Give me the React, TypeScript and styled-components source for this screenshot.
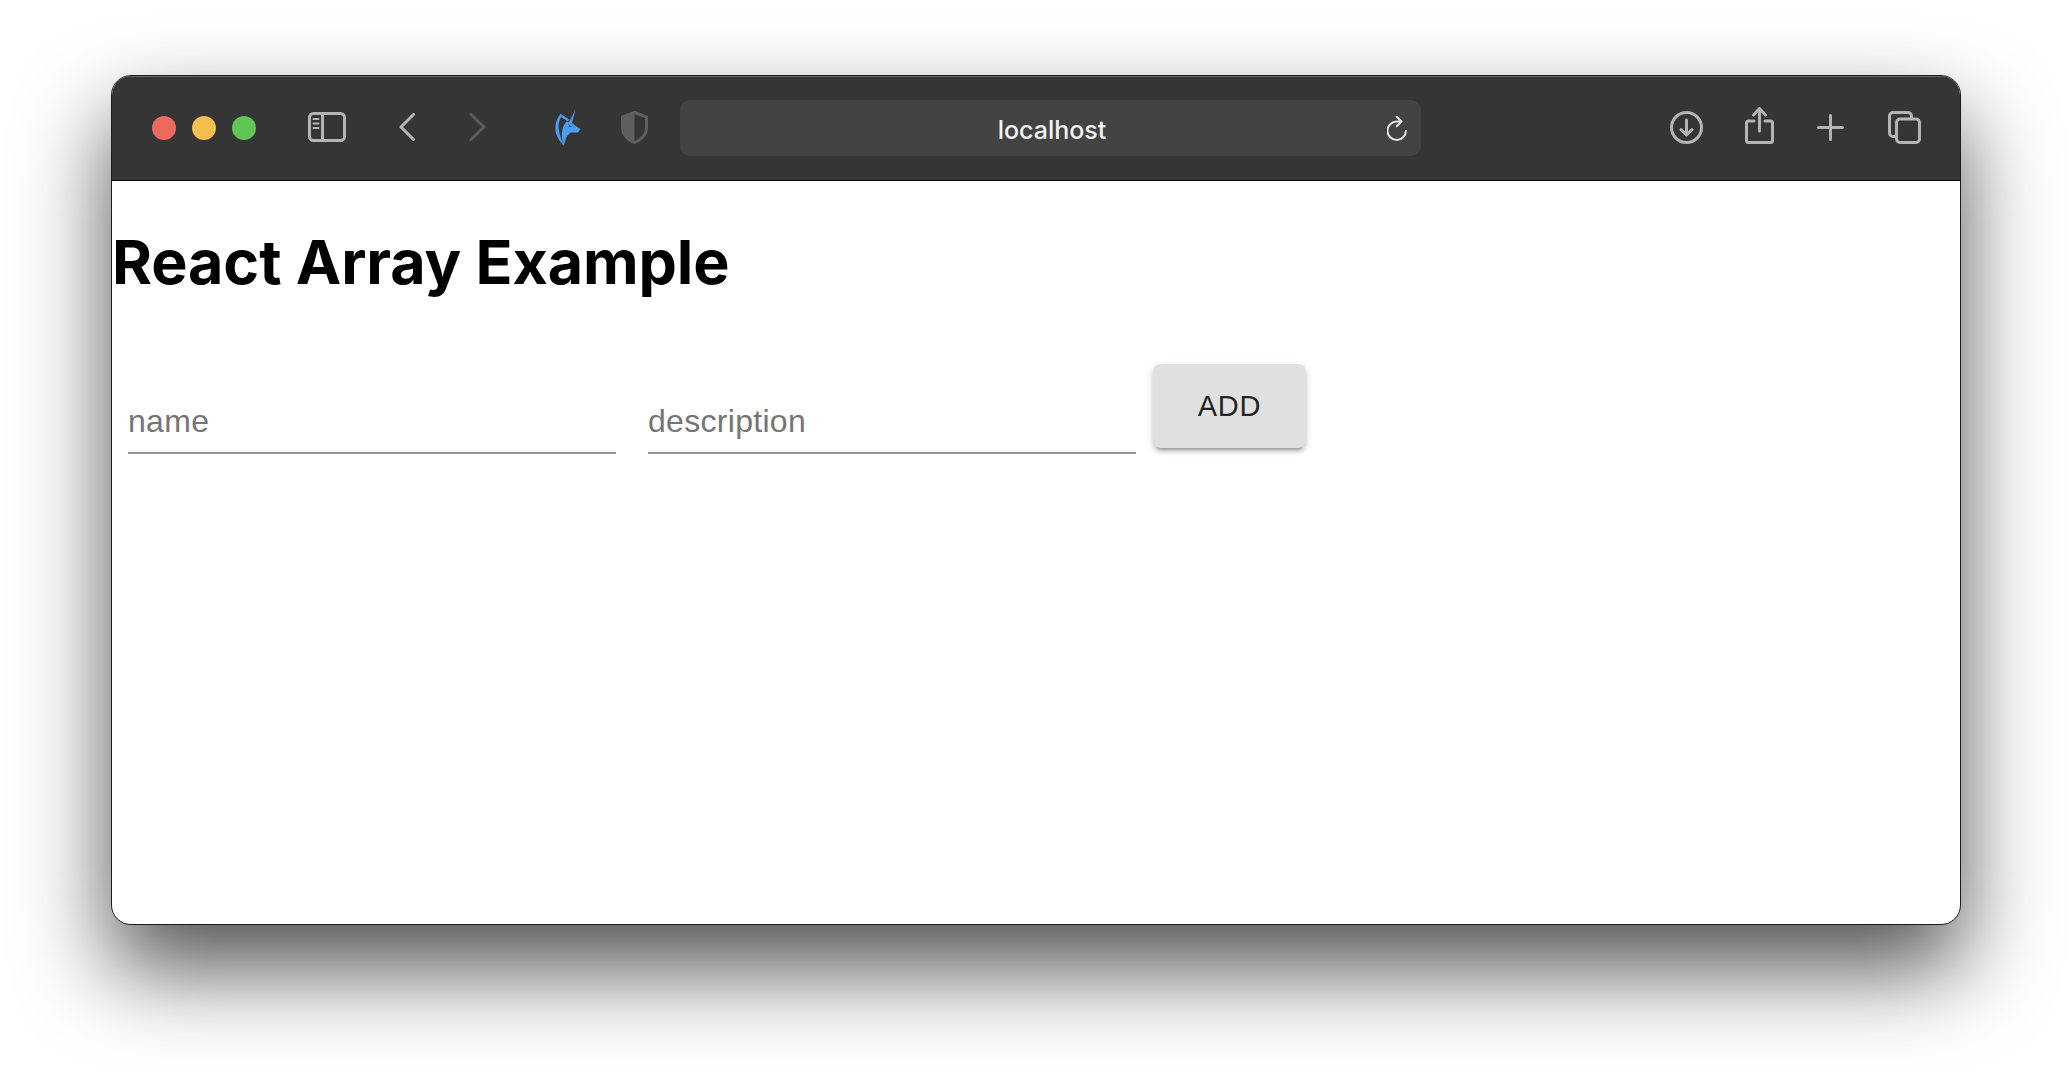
import React from 'react';
import styled, { createGlobalStyle } from 'styled-components';

const GlobalStyle = createGlobalStyle`
  html, body {
    margin: 0;
    padding: 0;
    background: #fff;
  }
`;

const Page = styled.div`
  width: 2072px;
  height: 1072px;
  padding: 75px 110px 0 111px;
  box-sizing: border-box;
  overflow: hidden;
  background: #fff;
`;

const BrowserWindow = styled.div`
  width: 1850px;
  height: 850px;
  box-sizing: border-box;
  display: flex;
  flex-direction: column;
  background: #fff;
  border: 1px solid #1c1c1c;
  border-radius: 20px;
  overflow: hidden;
  box-shadow: 0 44px 90px rgba(0, 0, 0, 0.68);
`;

const Toolbar = styled.div`
  flex: none;
  height: 105px;
  box-sizing: border-box;
  display: flex;
  align-items: center;
  padding: 0 39px 2px 40px;
  background: #353535;
  border-bottom: 1px solid #0c0c0c;
  box-shadow: inset 0 1px 0 #6a6a6a;
`;

const Lights = styled.div`
  display: flex;
  gap: 16px;
  margin-top: 2px;
`;

const Light = styled.span<{ $color: string }>`
  width: 24px;
  height: 24px;
  border-radius: 50%;
  background: ${(p) => p.$color};
`;

const ToolIcon = styled.svg<{ $gap: number; $shift?: number }>`
  flex: none;
  display: block;
  margin-left: ${(p) => p.$gap}px;
  margin-top: ${(p) => p.$shift ?? 0}px;
`;

const UrlBar = styled.div`
  flex: none;
  width: 741px;
  height: 56px;
  margin: 2px 0 0 32px;
  display: grid;
  grid-template-columns: 1fr auto 1fr;
  align-items: center;
  background: #434343;
  border-radius: 10px;
`;

const UrlText = styled.span`
  grid-column: 2;
  margin: 3px 0 0 3px;
  font-family: Inter, 'Liberation Sans', sans-serif;
  font-size: 25px;
  font-weight: 500;
  color: #f2f2f2;
`;

const ReloadSlot = styled.span`
  grid-column: 3;
  justify-self: end;
  display: flex;
  padding-right: 13px;
`;

const Content = styled.div`
  flex: 1;
`;

const Heading = styled.h1`
  margin: 0;
  padding-top: 44px;
  font-family: Inter, 'Liberation Sans', sans-serif;
  font-size: 61px;
  line-height: 74px;
  font-weight: 700;
  letter-spacing: -0.1px;
  color: #000;
`;

const FormRow = styled.form`
  display: flex;
  align-items: flex-start;
  margin-top: 65px;
`;

const Field = styled.input`
  width: 488px;
  height: 60px;
  margin: 30px 16px 0;
  padding: 0 0 4px;
  box-sizing: border-box;
  border: 0;
  border-bottom: 2px solid #949494;
  outline: none;
  background: transparent;
  font-family: 'Liberation Sans', Arial, sans-serif;
  font-size: 32px;
  letter-spacing: 0.3px;
  color: #333;

  &::placeholder {
    color: #757575;
    opacity: 1;
  }
`;

const AddButton = styled.button`
  width: 153px;
  height: 84px;
  margin-left: 1px;
  border: 0;
  border-radius: 8px;
  background: #e0e0e0;
  color: rgba(0, 0, 0, 0.87);
  font-family: 'Liberation Sans', Arial, sans-serif;
  font-size: 29px;
  letter-spacing: 0.8px;
  box-shadow: 0 6px 2px -4px rgba(0, 0, 0, 0.2), 0 4px 4px 0 rgba(0, 0, 0, 0.14),
    0 2px 10px 0 rgba(0, 0, 0, 0.12);
`;

const stroke = { fill: 'none', stroke: '#b4b4b4', strokeWidth: 3, strokeLinecap: 'round', strokeLinejoin: 'round' } as const;

export default function App() {
  return (
    <Page>
      <GlobalStyle />
      <BrowserWindow>
        <Toolbar>
          <Lights>
            <Light $color="#ed6a5e" />
            <Light $color="#f4bf4f" />
            <Light $color="#61c554" />
          </Lights>
          <ToolIcon $gap={52} width="38" height="30" viewBox="0 0 38 30">
            <rect x="1.5" y="1.5" width="35" height="27" rx="4" {...stroke} />
            <path d="M14.5 1.5v27" {...stroke} />
            <path d="M5.5 7h5M5.5 11.5h5M5.5 16h5" {...stroke} strokeWidth={2} />
          </ToolIcon>
          <ToolIcon $gap={53} width="16" height="28" viewBox="0 0 16 28">
            <path d="M14.5 1.5 2 14l12.5 12.5" {...stroke} />
          </ToolIcon>
          <ToolIcon $gap={54} width="17" height="28" viewBox="0 0 17 28">
            <path d="M2 1.5 15 14 2 26.5" {...stroke} stroke="#5c5c5c" />
          </ToolIcon>
          <ToolIcon $gap={69} width="26" height="37" viewBox="0 0 26 37">
            <path
              d="M5.500 4.800 14 10.500 13 12.500 6 8C3.500 12 3 17 4 22 5 27 7 32 8.700 36.700 4.500 32 1 27 .5 21 0 15 2 9 5.500 4.800Z"
              fill="#4a9bf2"
            />
            <path
              d="M20.500 .5 17 14 21 17 25.500 20 23 23.500H16C13 25 11 28 10.500 31L8.700 36.700C7 31 6 26 7.500 20 8.500 16.500 10 14 11.500 12.500L14 13Z"
              fill="#4a9bf2"
            />
            <path d="M13.500 15.500 17 17.500 14 17.800Z" fill="#353535" />
          </ToolIcon>
          <ToolIcon $gap={40} width="27" height="33" viewBox="0 0 27 33">
            <path d="M13.500 1.500 25.500 6v11c0 6.500-5 11.500-12 14.500C6.500 28.500 1.500 23.500 1.500 17V6Z" fill="none" stroke="#5e5e5e" strokeWidth="3" strokeLinejoin="round" />
            <path d="M13.500 1.500 1.500 6v11c0 6.500 5 11.500 12 14.500Z" fill="#5e5e5e" />
          </ToolIcon>
          <UrlBar>
            <UrlText>localhost</UrlText>
            <ReloadSlot>
              <svg width="21" height="25" viewBox="0 0 21 25">
                <path d="M14 5.500H9.700A9.200 9.200 0 1 0 18.900 14.700" fill="none" stroke="#e4e4e4" strokeWidth="2" strokeLinecap="round" />
                <path d="M9.700 .8 14.500 5.500 9.700 10.200" fill="none" stroke="#e4e4e4" strokeWidth="2" strokeLinecap="round" strokeLinejoin="round" />
              </svg>
            </ReloadSlot>
          </UrlBar>
          <ToolIcon $gap={249} width="33" height="33" viewBox="0 0 33 33">
            <circle cx="16.500" cy="16.500" r="15" {...stroke} />
            <path d="M16.500 9v14.500M11 18.500l5.500 5.500 5.500-5.500" {...stroke} />
          </ToolIcon>
          <ToolIcon $gap={42} $shift={-4} width="29" height="37" viewBox="0 0 29 37">
            <path d="M9 14H3.500a2 2 0 0 0-2 2v17.500a2 2 0 0 0 2 2h22a2 2 0 0 0 2-2V16a2 2 0 0 0-2-2H20" {...stroke} />
            <path d="M14.500 24V2M8.500 8l6-6.500 6 6.500" {...stroke} />
          </ToolIcon>
          <ToolIcon $gap={43} width="27" height="27" viewBox="0 0 27 27">
            <path d="M13.500 1.500v24M1.500 13.500h24" {...stroke} />
          </ToolIcon>
          <ToolIcon $gap={44} width="33" height="33" viewBox="0 0 33 33">
            <path d="M7 25.500H5a3.500 3.500 0 0 1-3.500-3.500V5A3.500 3.500 0 0 1 5 1.500h15A3.500 3.500 0 0 1 23.500 5v2" {...stroke} />
            <rect x="8.500" y="8" width="23" height="23.500" rx="3.500" {...stroke} />
          </ToolIcon>
        </Toolbar>
        <Content>
          <Heading>React Array Example</Heading>
          <FormRow>
            <Field placeholder="name" />
            <Field placeholder="description" />
            <AddButton type="button">ADD</AddButton>
          </FormRow>
        </Content>
      </BrowserWindow>
    </Page>
  );
}
